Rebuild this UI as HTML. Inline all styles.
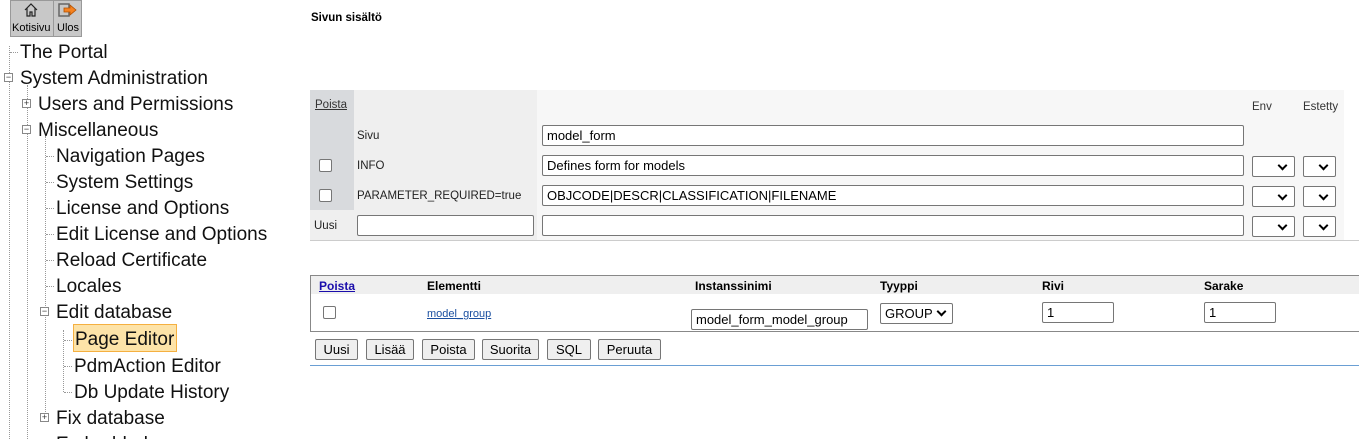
<!DOCTYPE html>
<html style="width:1359px;height:439px;overflow:hidden"><head><meta charset="utf-8"><style>
*{box-sizing:border-box;margin:0;padding:0}
body{width:1359px;height:439px;overflow:hidden;background:#fff;font-family:"Liberation Sans",Arial,sans-serif;position:relative}
.a{position:absolute}
.t{position:absolute;font-size:19px;color:#111;white-space:nowrap;line-height:22px;margin-top:1px}
.vl{position:absolute;border-left:1px dotted #999;width:0}
.hl{position:absolute;border-top:1px dotted #999;height:0}
.box{position:absolute;width:9px;height:9px;border:1px solid #888;background:#fff;font-size:9px;line-height:7px;text-align:center;color:#333}
.s{font-size:11.5px;color:#222;position:absolute;white-space:nowrap;margin-top:2px}
.in{position:absolute;height:21px;border:1px solid #767676;border-radius:2px;background:#fff;font-size:13px;padding:2px 4px;line-height:15px;color:#000;white-space:nowrap;overflow:hidden}
.sel{position:absolute;width:43px;height:21px;border:1px solid #767676;border-radius:2px;background:#fff}
.sel:after{content:"";position:absolute;right:8px;top:5px;width:5px;height:5px;border-right:2px solid #000;border-bottom:2px solid #000;transform:rotate(45deg)}
.cb{position:absolute;width:13px;height:13px;border:1px solid #767676;border-radius:2px;background:#fff}
.btn{position:absolute;top:339px;height:21px;border:1px solid #767676;border-radius:2px;background:#efefef;font-size:13px;line-height:19px;text-align:center;color:#000}
.h{font-size:12px;font-weight:bold;position:absolute;color:#000}
</style></head><body>
<div class="a" style="left:10px;top:0;width:72px;height:37px;background:#c8c8c8;border:1px solid #999"></div>
<div class="a" style="left:53px;top:0;width:1px;height:37px;background:#999"></div>
<svg class="a" style="left:24px;top:3px" width="14" height="14" viewBox="0 0 14 14"><path d="M1 7L7 1L13 7M3 5V13H6V9H8V13H11V5" fill="none" stroke="#222" stroke-width="1.2"/></svg>
<svg class="a" style="left:58px;top:3px" width="20" height="14" viewBox="0 0 20 14"><rect x="1" y="1" width="10" height="12" fill="none" stroke="#666" stroke-width="1.5"/><path d="M6 5H12V2L18 7L12 12V9H6Z" fill="#f58220" stroke="#b05000" stroke-width="0.8"/></svg>
<div class="s" style="left:12px;top:20px;font-size:11px;color:#000">Kotisivu</div>
<div class="s" style="left:57px;top:20px;font-size:11px;color:#000">Ulos</div>

<div class="vl" style="left:9px;top:46px;height:393px"></div>
<div class="hl" style="left:10px;top:52px;width:8px"></div>
<div class="t" style="left:20px;top:41px">The Portal</div>
<div class="box" style="left:4px;top:73px">−</div>
<div class="t" style="left:20px;top:67px">System Administration</div>
<div class="vl" style="left:27px;top:85px;height:354px"></div>
<div class="box" style="left:22px;top:99px">+</div>
<div class="t" style="left:38px;top:93px">Users and Permissions</div>
<div class="box" style="left:22px;top:125px">−</div>
<div class="t" style="left:38px;top:119px">Miscellaneous</div>
<div class="vl" style="left:45px;top:136px;height:282px"></div>
<div class="hl" style="left:46px;top:156px;width:8px"></div><div class="t" style="left:56px;top:145px">Navigation Pages</div>
<div class="hl" style="left:46px;top:182px;width:8px"></div><div class="t" style="left:56px;top:171px">System Settings</div>
<div class="hl" style="left:46px;top:208px;width:8px"></div><div class="t" style="left:56px;top:197px">License and Options</div>
<div class="hl" style="left:46px;top:234px;width:8px"></div><div class="t" style="left:56px;top:223px">Edit License and Options</div>
<div class="hl" style="left:46px;top:260px;width:8px"></div><div class="t" style="left:56px;top:249px">Reload Certificate</div>
<div class="hl" style="left:46px;top:286px;width:8px"></div><div class="t" style="left:56px;top:275px">Locales</div>
<div class="box" style="left:40px;top:307px">−</div>
<div class="t" style="left:56px;top:301px">Edit database</div>
<div class="vl" style="left:63px;top:330px;height:62px"></div>
<div class="hl" style="left:64px;top:340px;width:8px"></div>
<div class="a" style="left:73px;top:324px;width:104px;height:28px;background:#fde3a8;border:1px solid #f5b041"></div>
<div class="t" style="left:75px;top:328px">Page Editor</div>
<div class="hl" style="left:64px;top:366px;width:8px"></div><div class="t" style="left:74px;top:355px">PdmAction Editor</div>
<div class="hl" style="left:64px;top:392px;width:8px"></div><div class="t" style="left:74px;top:381px">Db Update History</div>
<div class="box" style="left:40px;top:413px">+</div>
<div class="t" style="left:56px;top:407px">Fix database</div>
<div class="t" style="left:56px;top:433px">Embedded</div>

<div class="h" style="left:311px;top:12px;font-size:11.5px">Sivun sisältö</div>

<div class="a" style="left:310px;top:90px;width:1034px;height:150px;background:#f7f7f7"></div>
<div class="a" style="left:310px;top:90px;width:227px;height:150px;background:#efefef"></div>
<div class="a" style="left:310px;top:90px;width:44px;height:120px;background:#d8dadd"></div>
<div class="a" style="left:310px;top:240px;width:1049px;height:1px;background:#ccc"></div>
<div class="s" style="left:315px;top:97px;text-decoration:underline;color:#333">Poista</div>
<div class="s" style="left:1252px;top:99px;color:#333">Env</div>
<div class="s" style="left:1303px;top:99px;color:#333">Estetty</div>
<div class="s" style="left:357px;top:128px">Sivu</div>
<div class="in" style="left:542px;top:125px;width:702px">model_form</div>
<div class="cb" style="left:319px;top:159px"></div>
<div class="s" style="left:357px;top:158px">INFO</div>
<div class="in" style="left:542px;top:155px;width:702px">Defines form for models</div>
<div class="sel" style="left:1252px;top:156px"></div><div class="sel" style="left:1303px;top:156px;width:33px"></div>
<div class="cb" style="left:319px;top:189px"></div>
<div class="s" style="left:357px;top:188px">PARAMETER_REQUIRED=true</div>
<div class="in" style="left:542px;top:185px;width:702px">OBJCODE|DESCR|CLASSIFICATION|FILENAME</div>
<div class="sel" style="left:1252px;top:186px"></div><div class="sel" style="left:1303px;top:186px;width:33px"></div>
<div class="s" style="left:314px;top:218px">Uusi</div>
<div class="in" style="left:357px;top:215px;width:177px"></div>
<div class="in" style="left:542px;top:215px;width:702px"></div>
<div class="sel" style="left:1252px;top:216px"></div><div class="sel" style="left:1303px;top:216px;width:33px"></div>

<div class="a" style="left:310px;top:275px;width:1049px;height:57px;border:1px solid #888;border-right:none"></div>
<div class="a" style="left:311px;top:276px;width:1048px;height:18px;background:#efefef"></div>
<div class="h" style="left:319px;top:279px;color:#1a0dab;text-decoration:underline">Poista</div>
<div class="h" style="left:427px;top:279px">Elementti</div>
<div class="h" style="left:695px;top:279px">Instanssinimi</div>
<div class="h" style="left:880px;top:279px">Tyyppi</div>
<div class="h" style="left:1042px;top:279px">Rivi</div>
<div class="h" style="left:1204px;top:279px">Sarake</div>
<div class="cb" style="left:323px;top:306px"></div>
<div class="s" style="left:427px;top:306px;color:#1a4fa0;text-decoration:underline;font-size:11px">model_group</div>
<div class="in" style="left:691px;top:309px;width:177px">model_form_model_group</div>
<div class="in" style="left:880px;top:303px;width:73px;padding-right:20px">GROUP</div>
<div class="sel" style="left:880px;top:303px;width:73px;background:transparent;border:none"></div>
<div class="in" style="left:1042px;top:302px;width:72px">1</div>
<div class="in" style="left:1204px;top:302px;width:72px">1</div>

<div class="btn" style="left:315px;width:43px">Uusi</div>
<div class="btn" style="left:366px;width:48px">Lisää</div>
<div class="btn" style="left:422px;width:53px">Poista</div>
<div class="btn" style="left:482px;width:57px">Suorita</div>
<div class="btn" style="left:547px;width:44px">SQL</div>
<div class="btn" style="left:598px;width:63px">Peruuta</div>
<div class="a" style="left:310px;top:365px;width:1049px;height:1px;background:#6a9fd4"></div>
</body></html>
